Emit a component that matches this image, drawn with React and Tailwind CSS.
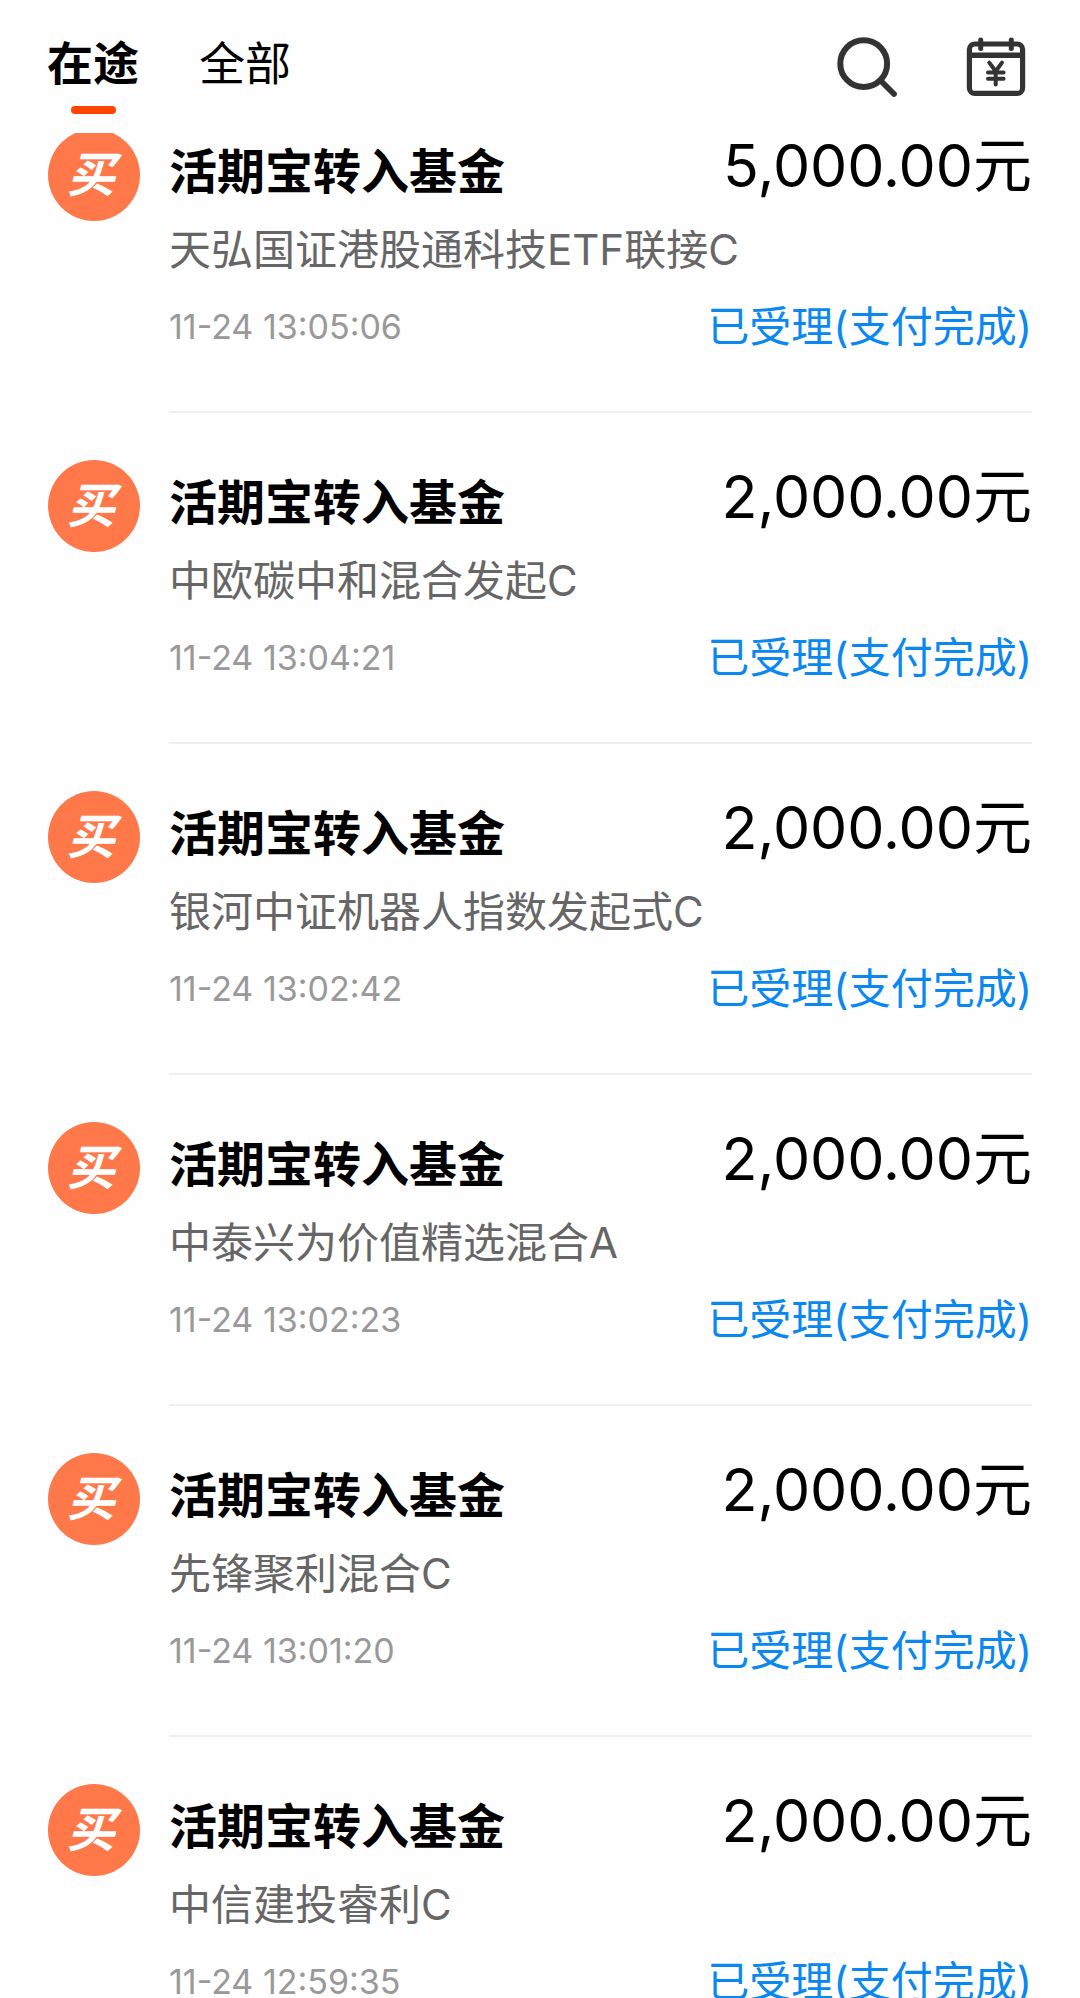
import { useState } from "react";

const tabs = ["在途", "全部"];

const records = [
  { fund: "天弘国证港股通科技ETF联接C", time: "11-24 13:05:06", amount: "5,000.00元" },
  { fund: "中欧碳中和混合发起C", time: "11-24 13:04:21", amount: "2,000.00元" },
  { fund: "银河中证机器人指数发起式C", time: "11-24 13:02:42", amount: "2,000.00元" },
  { fund: "中泰兴为价值精选混合A", time: "11-24 13:02:23", amount: "2,000.00元" },
  { fund: "先锋聚利混合C", time: "11-24 13:01:20", amount: "2,000.00元" },
  { fund: "中信建投睿利C", time: "11-24 12:59:35", amount: "2,000.00元" },
];

function SearchIcon() {
  return (
    <svg className="size-[60px]" viewBox="0 0 60 60" fill="none" stroke="currentColor" strokeLinecap="round" aria-hidden="true">
      <circle cx="26.7" cy="26.7" r="23.4" strokeWidth="6" />
      <path d="M44 44 57 57" strokeWidth="5.8" />
    </svg>
  );
}

function CalendarIcon() {
  return (
    <svg className="size-[60px]" viewBox="0 0 60 60" fill="none" stroke="currentColor" aria-hidden="true">
      <rect x="3.4" y="7" width="53.2" height="49.4" rx="5.5" strokeWidth="5.2" />
      <path d="M3.4 18.3H56.6" strokeWidth="5.4" />
      <path d="M14.7 3V11.4M45.3 3V11.4" strokeWidth="5" strokeLinecap="round" />
      <path
        d="M23.3 25.6 29.7 34.2 36 25.6M29.7 34.2V47.6M22 35.4H37.6M22 41.7H37.6"
        strokeWidth="4"
        strokeLinecap="round"
        strokeLinejoin="round"
      />
    </svg>
  );
}

function Record({ fund, time, amount }) {
  return (
    <li className="flex gap-[29px] px-12">
      <span className="mt-[47px] flex size-[92px] shrink-0 items-center justify-center rounded-full bg-[#ff784a] pr-1.5 text-5xl leading-none font-bold text-white italic">
        买
      </span>
      <div className="min-w-0 flex-1 border-b-2 border-[#efefef] pt-11 pb-[39px]">
        <div className="flex items-start justify-between whitespace-nowrap text-black">
          <h2 className="text-5xl leading-[92px] font-bold">活期宝转入基金</h2>
          <span className="text-[59px] leading-[80px]">{amount}</span>
        </div>
        <p className="truncate text-[42px] leading-[64px] text-[#666666]">{fund}</p>
        <div className="flex justify-between leading-[90px] whitespace-nowrap">
          <time className="text-[34px] leading-[90px] text-[#999999]">{time}</time>
          <span className="text-[42px] leading-[90px] text-[#0a88f0]">已受理(支付完成)</span>
        </div>
      </div>
    </li>
  );
}

export default function App() {
  const [active, setActive] = useState("在途");

  return (
    <div className="flex h-screen flex-col overflow-hidden bg-[#fefefe] font-['Inter','Noto_Sans_CJK_SC',sans-serif]">
      {/* Top bar */}
      <header className="flex h-[133px] shrink-0 items-start justify-between pr-[54px] pl-[47px]">
        <nav className="flex gap-[60px] pt-7">
          {tabs.map((tab) => (
            <button
              key={tab}
              type="button"
              onClick={() => setActive(tab)}
              className={`flex flex-col items-center gap-2 text-[46px] leading-[70px] text-black ${active === tab ? "font-bold" : "font-normal"}`}
            >
              {tab}
              {active === tab && <span className="h-2 w-[45px] rounded-full bg-[#ff4400]"></span>}
            </button>
          ))}
        </nav>
        <div className="flex gap-[69px] pt-[37px] text-[#333333]">
          <button type="button" aria-label="搜索">
            <SearchIcon />
          </button>
          <button type="button" aria-label="交易日历">
            <CalendarIcon />
          </button>
        </div>
      </header>

      {/* Orders, scrolled a little way under the top bar */}
      <main className="min-h-0 flex-1 overflow-hidden">
        <ul className="-mt-[51px]">
          {records.map((record) => (
            <Record key={record.time} {...record} />
          ))}
        </ul>
      </main>
    </div>
  );
}
